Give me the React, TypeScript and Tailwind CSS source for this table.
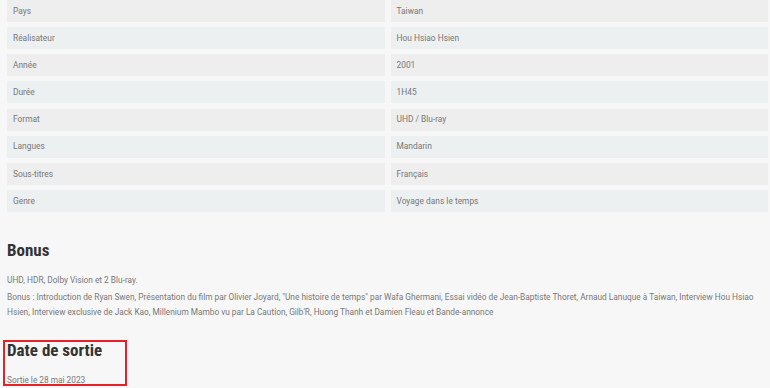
const SPECS = [
  ['Pays', 'Taiwan'],
  ['Réalisateur', 'Hou Hsiao Hsien'],
  ['Année', '2001'],
  ['Durée', '1H45'],
  ['Format', 'UHD / Blu-ray'],
  ['Langues', 'Mandarin'],
  ['Sous-titres', 'Français'],
  ['Genre', 'Voyage dans le temps'],
];

const headingFont = "font-['Roboto_Condensed','Liberation_Sans_Narrow',Roboto,sans-serif]";

export default function App() {
  return (
    <div className="min-h-screen bg-[#f7f7f7] pl-[7px] pr-[2px] font-['Roboto','Liberation_Sans',sans-serif] text-[#777]">
      {/* Spec table */}
      <div className="flex flex-col gap-[5.15px]">
        {SPECS.map(([label, value], i) => (
          <div key={label} className="grid grid-cols-2 gap-[6px]">
            <div className={`h-[22px] flex items-center px-[6px] text-[8.4px] ${i % 2 ? 'bg-[#edf0f1]' : 'bg-[#eeeeee]'}`}>{label}</div>
            <div className={`h-[22px] flex items-center px-[6px] text-[8.4px] ${i % 2 ? 'bg-[#edf0f1]' : 'bg-[#eeeeee]'}`}>{value}</div>
          </div>
        ))}
      </div>

      {/* Bonus */}
      <h2 className={`${headingFont} mt-[28px] text-[17px] font-bold text-[#333] leading-[20px] [font-stretch:condensed]`}>Bonus</h2>
      <p className="mt-[13px] text-[8.3px] leading-[15px]">UHD, HDR, Dolby Vision et 2 Blu-ray.</p>
      <p className="mt-[2px] text-[8.3px] leading-[15px]">
        Bonus : Introduction de Ryan Swen, Présentation du film par Olivier Joyard, "Une histoire de temps" par Wafa Ghermani, Essai vidéo de Jean-Baptiste Thoret, Arnaud Lanuque à Taiwan, Interview Hou Hsiao Hsien, Interview exclusive de Jack Kao, Millenium Mambo vu par La Caution, Gilb'R, Huong Thanh et Damien Fleau et Bande-annonce
      </p>

      {/* Date de sortie */}
      <div className="mt-[20px] -ml-[4px] w-[124px] border-2 border-[#e8202a] pl-[2px]">
        <h2 className={`${headingFont} text-[17px] font-bold text-[#333] leading-[16px] [font-stretch:condensed]`}>Date de sortie</h2>
        <p className="mt-[18px] text-[8.3px] leading-[8px]">Sortie le 28 mai 2023</p>
      </div>
    </div>
  );
}
